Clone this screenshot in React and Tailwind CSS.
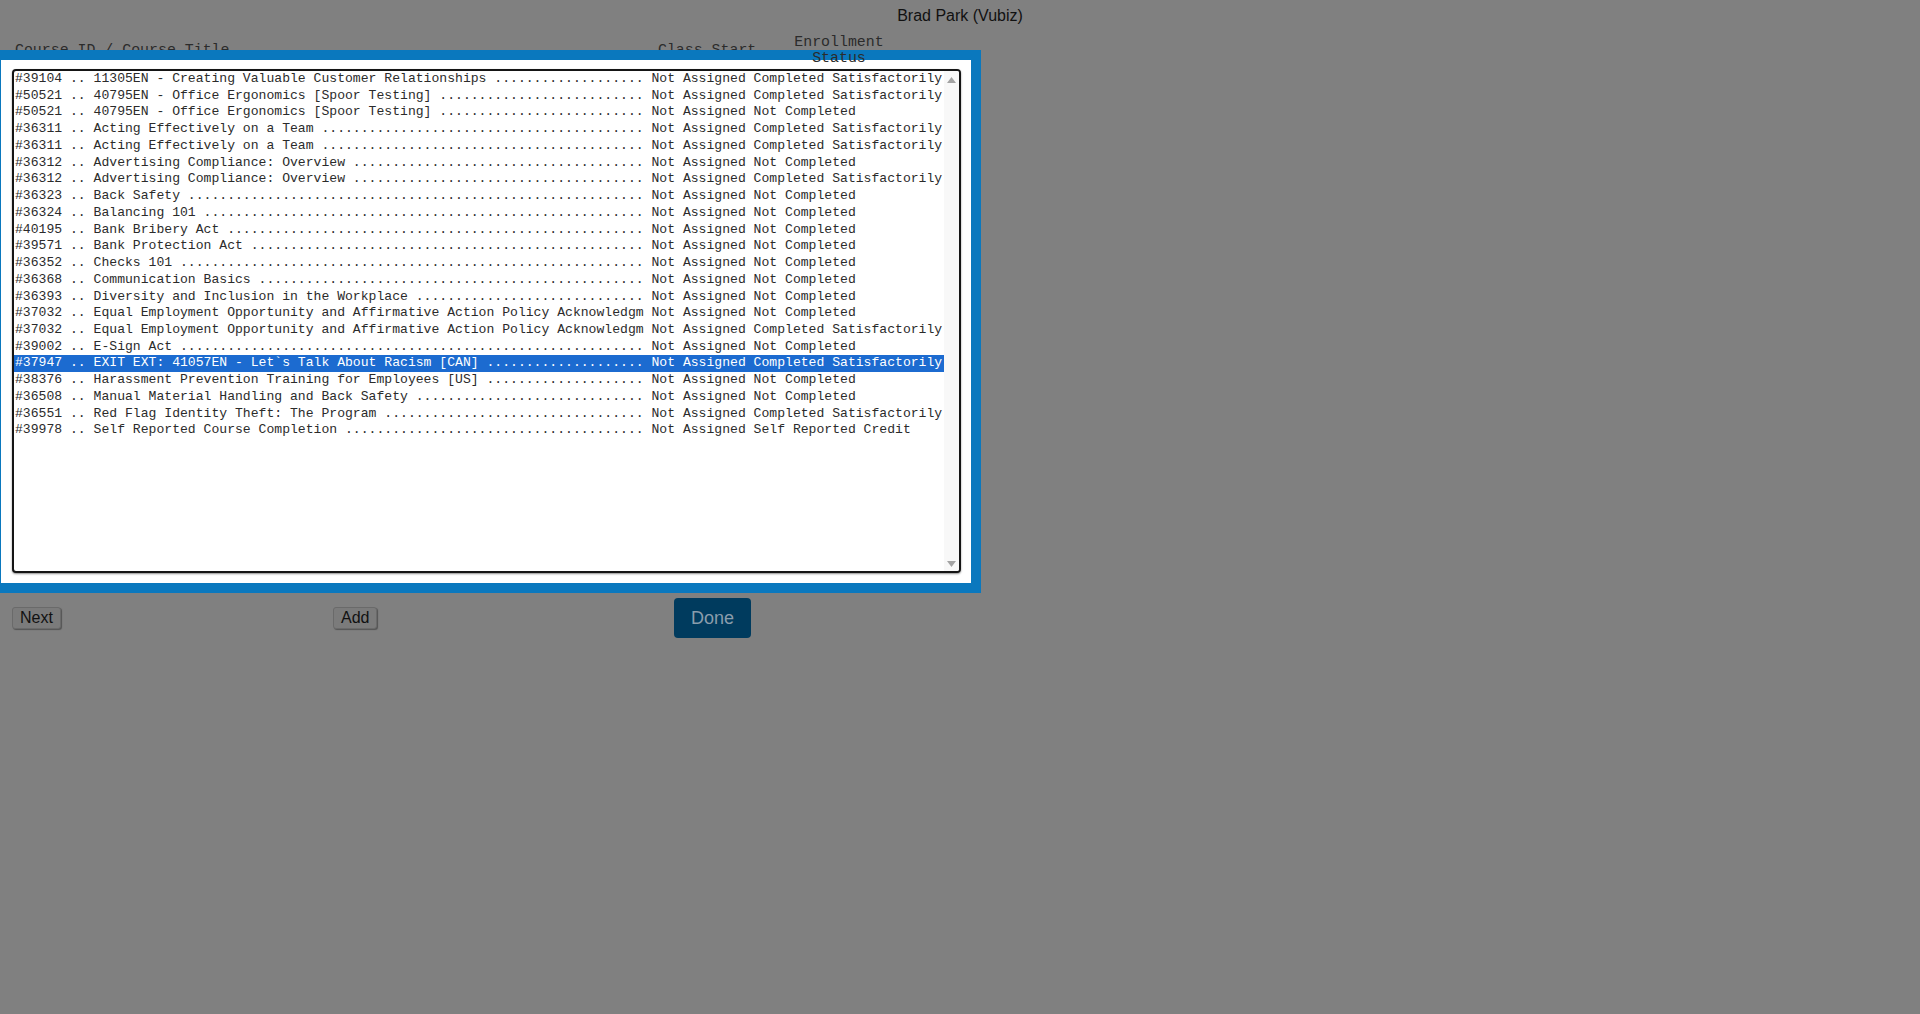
import React from "react";

const courses = [
  ["#39104", "11305EN - Creating Valuable Customer Relationships", "Completed Satisfactorily"],
  ["#50521", "40795EN - Office Ergonomics [Spoor Testing]", "Completed Satisfactorily"],
  ["#50521", "40795EN - Office Ergonomics [Spoor Testing]", "Not Completed"],
  ["#36311", "Acting Effectively on a Team", "Completed Satisfactorily"],
  ["#36311", "Acting Effectively on a Team", "Completed Satisfactorily"],
  ["#36312", "Advertising Compliance: Overview", "Not Completed"],
  ["#36312", "Advertising Compliance: Overview", "Completed Satisfactorily"],
  ["#36323", "Back Safety", "Not Completed"],
  ["#36324", "Balancing 101", "Not Completed"],
  ["#40195", "Bank Bribery Act", "Not Completed"],
  ["#39571", "Bank Protection Act", "Not Completed"],
  ["#36352", "Checks 101", "Not Completed"],
  ["#36368", "Communication Basics", "Not Completed"],
  ["#36393", "Diversity and Inclusion in the Workplace", "Not Completed"],
  ["#37032", "Equal Employment Opportunity and Affirmative Action Policy Acknowledgment", "Not Completed"],
  ["#37032", "Equal Employment Opportunity and Affirmative Action Policy Acknowledgment", "Completed Satisfactorily"],
  ["#39002", "E-Sign Act", "Not Completed"],
  ["#37947", "EXIT EXT: 41057EN - Let`s Talk About Racism [CAN]", "Completed Satisfactorily"],
  ["#38376", "Harassment Prevention Training for Employees [US]", "Not Completed"],
  ["#36508", "Manual Material Handling and Back Safety", "Not Completed"],
  ["#36551", "Red Flag Identity Theft: The Program", "Completed Satisfactorily"],
  ["#39978", "Self Reported Course Completion", "Self Reported Credit"],
];

// title column is 70 chars wide, filled out with dot leaders
const fitTitle = (t) => (t.length >= 70 ? t.slice(0, 70) : (t + " ").padEnd(70, "."));

const monoFamily = "font-['Liberation_Mono','Courier_New',monospace]";
const sans = "font-['Liberation_Sans',Arial,sans-serif]";

export default function App() {
  const selected = 17;

  return (
    <div className={`min-h-screen w-full bg-[#808080] overflow-hidden ${sans}`}>
      <div className="h-[32px] pt-[7px] text-center text-[16px] leading-[18px] text-[#111]">
        Brad Park (Vubiz)
      </div>

      <div className={`flex h-[18px] text-[14.9px] leading-[16px] text-[#2b2b2b] ${monoFamily}`}>
        <div className="ml-[15px] w-[643px] pt-[10px] whitespace-pre">Course ID / Course Title</div>
        <div className="w-[136px] pt-[10px] whitespace-pre">Class Start</div>
        <div className="relative z-20 w-[90px] pt-[2px] text-center">
          Enrollment
          <br />
          Status
        </div>
      </div>

      <div className="relative z-10 ml-[-9px] w-[990px] border-[10px] border-[#0a78be] bg-white pt-[9px] pb-[10px] pl-[11px] pr-[10px]">
        <div className="flex h-[504px] rounded-[4px] border-2 border-[#151515] bg-white shadow-[0_1px_2px_rgba(0,0,0,0.45)] overflow-hidden">
          <div className={`flex-1 text-[13.1px] leading-[16.73px] text-[#2b2b2b] ${monoFamily}`}>
            {courses.map(([id, title, status], i) => (
              <div
                key={i}
                className={`pl-[1px] whitespace-pre ${i === selected ? "bg-[#1c6bd0] text-white" : ""}`}
              >
                {`${id} .. ${fitTitle(title)} Not Assigned ${status}`}
              </div>
            ))}
          </div>
          <div className="flex w-[15px] flex-col items-center justify-between bg-[#f8f8f8] pt-[6px] pb-[4px]">
            <svg width="9" height="6" viewBox="0 0 9 6">
              <path d="M4.5 0 L9 6 L0 6 Z" fill="#a3a3a3" />
            </svg>
            <svg width="9" height="6" viewBox="0 0 9 6">
              <path d="M0 0 L9 0 L4.5 6 Z" fill="#a3a3a3" />
            </svg>
          </div>
        </div>
      </div>

      <div className="mt-[5px] flex h-[40px] items-center">
        <div className="w-[333px] pl-[12px]">
          <button className="rounded-[3px] border border-[#6a6a6a] bg-[#7b7b7b] px-[7px] py-[1px] text-[16px] leading-[18px] text-[#111] shadow-[1px_1px_1px_rgba(0,0,0,0.35)]">
            Next
          </button>
        </div>
        <div className="w-[341px]">
          <button className="rounded-[3px] border border-[#6a6a6a] bg-[#7b7b7b] px-[7px] py-[1px] text-[16px] leading-[18px] text-[#111] shadow-[1px_1px_1px_rgba(0,0,0,0.35)]">
            Add
          </button>
        </div>
        <button className="flex h-[40px] w-[77px] items-center justify-center rounded-[4px] bg-[#003b5e] text-[18px] text-[#8a9dac]">
          Done
        </button>
      </div>
    </div>
  );
}
